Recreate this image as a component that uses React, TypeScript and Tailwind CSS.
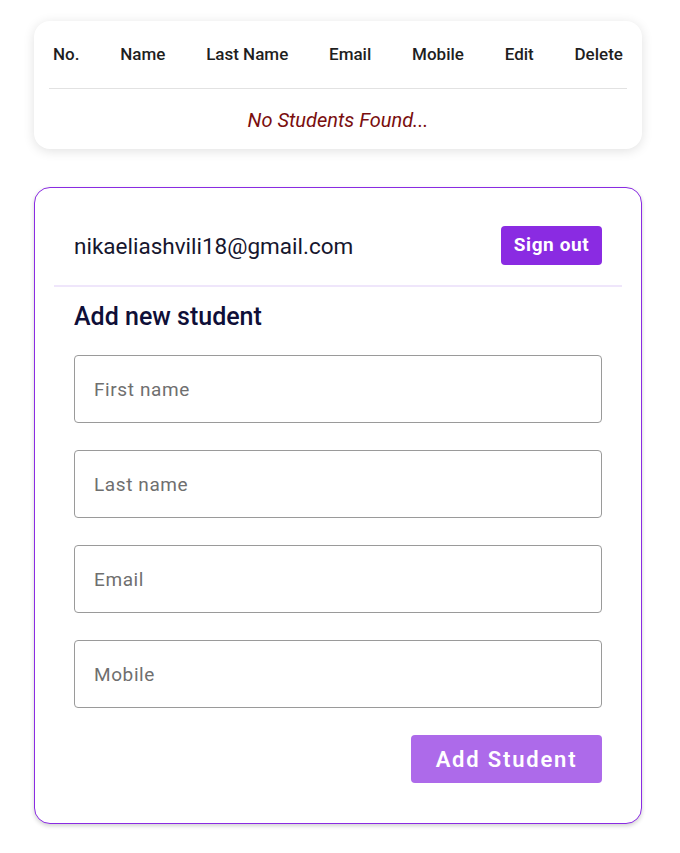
export default function App() {
  const cols = ["No.", "Name", "Last Name", "Email", "Mobile", "Edit", "Delete"];
  const fields = ["First name", "Last name", "Email", "Mobile"];

  return (
    <main className="min-h-screen bg-white font-['Roboto',sans-serif] px-[34px] pt-[21px] pb-8">
      <section className="w-[608px] rounded-2xl bg-white shadow-[0_2px_12px_rgba(0,0,0,0.12)] px-[15px] pt-[21px] pb-[15px]">
        <div className="flex justify-between border-b border-[#e2e2e2] px-1 pb-[22px]">
          {cols.map((c) => (
            <div key={c} className="text-[17px] leading-6 font-medium text-[#1f1f1f]">
              {c}
            </div>
          ))}
        </div>
        <p className="pt-[18px] text-center text-[20px] leading-[27px] italic text-[#7a0e0e]">
          No Students Found...
        </p>
      </section>

      <section className="mt-[38px] w-[608px] rounded-2xl border border-[#8a2be2] bg-white shadow-[0_2px_4px_rgba(0,0,0,0.18)] px-[19px] pt-[38px] pb-[40px]">
        <div className="flex items-center justify-between px-5 pb-5 border-b-2 border-[#efe6fb]">
          <span className="text-[22.5px] leading-[30px] text-[#16162e]">nikaeliashvili18@gmail.com</span>
          <button className="h-[39px] w-[101px] rounded-[4px] bg-[#8a2be2] text-[19px] font-bold tracking-[0.6px] text-white">
            Sign out
          </button>
        </div>
        <div className="px-5">
          <h2 className="mt-[13px] text-[25px] leading-[33px] font-medium text-[#0f0f38]">Add new student</h2>
          <div className="mt-[22px] flex flex-col gap-[27px]">
            {fields.map((f) => (
              <input
                key={f}
                placeholder={f}
                className="h-[68px] w-full rounded-[4px] border border-[#9a9a9a] px-[19px] text-[19px] tracking-[0.6px] text-[#333] placeholder:text-[#6f6f6f] outline-none"
              />
            ))}
          </div>
          <div className="mt-[27px] flex justify-end">
            <button className="h-[48px] w-[191px] rounded-[4px] bg-[#ad6aea] text-[22px] font-semibold tracking-[1.8px] text-white">
              Add Student
            </button>
          </div>
        </div>
      </section>
    </main>
  );
}
